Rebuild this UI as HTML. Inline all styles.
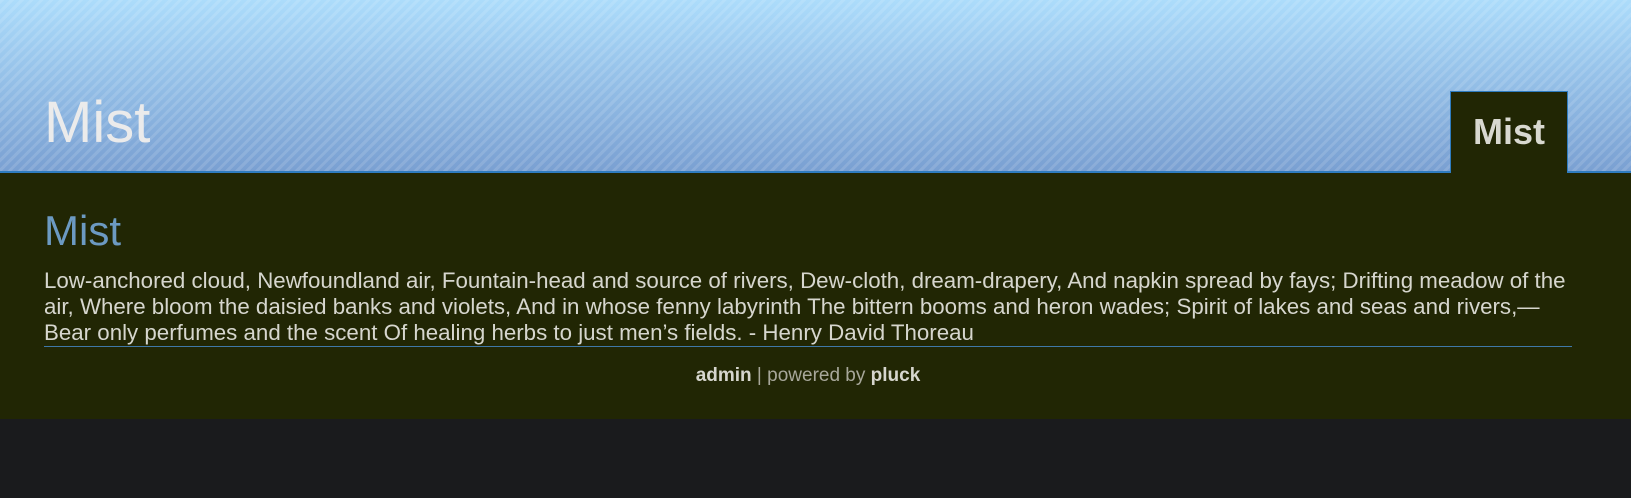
<!DOCTYPE html>
<html><head><meta charset="utf-8"><style>
html,body{margin:0;padding:0;width:1631px;height:498px;background:#1a1b1d;font-family:"Liberation Sans",sans-serif;overflow:hidden}
#head{position:relative;height:171px;border-bottom:2px solid #2f7cc0;
background:repeating-linear-gradient(135deg,rgba(255,255,255,0.12) 0 3px,rgba(255,255,255,0) 3px 7px),linear-gradient(#acdcfb,#7aa0d2)}
#head h1{position:absolute;left:44px;top:87px;margin:0;font-weight:normal;font-size:58px;color:#ebebeb;line-height:72px}
#nav{position:absolute;left:1450px;top:91px;width:116px;height:81px;background:#212604;border:1px solid #2f7cc0;border-bottom:none;color:#d8d8d0;font-weight:bold;font-size:36px;text-align:center;line-height:80px}
#main{background:#212604;height:246px;position:relative}
#main h2{position:absolute;left:44px;margin:0;top:0;padding-top:33px;font-weight:normal;font-size:42px;color:#6c9ac2;line-height:50px}
#txt{position:absolute;left:44px;top:95px;width:1528px;font-size:22.3px;line-height:26px;color:#d6d6ce;border-bottom:1px solid #3f78a8;padding-bottom:0}
#foot{position:absolute;left:44px;width:1528px;top:192px;text-align:center;font-size:19px;color:#a7a79a}
#foot b{color:#d6d6ce}
</style></head><body>
<div id="head"><h1>Mist</h1><div id="nav">Mist</div></div>
<div id="main"><h2>Mist</h2>
<div id="txt">Low-anchored cloud, Newfoundland air, Fountain-head and source of rivers, Dew-cloth, dream-drapery, And napkin spread by fays; Drifting meadow of the air, Where bloom the daisied banks and violets, And in whose fenny labyrinth The bittern booms and heron wades; Spirit of lakes and seas and rivers,— Bear only perfumes and the scent Of healing herbs to just men’s fields. - Henry David Thoreau</div>
<div id="foot"><b>admin</b> | powered by <b>pluck</b></div>
</div>
</body></html>
